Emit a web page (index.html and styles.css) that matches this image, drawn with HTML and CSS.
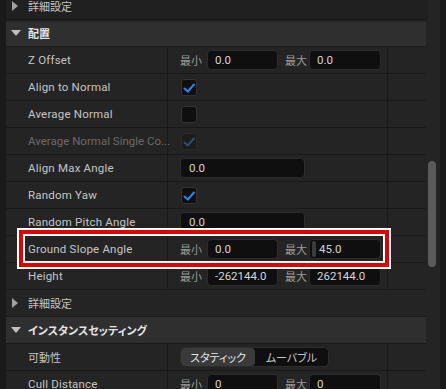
FILE: index.html
```html
<!DOCTYPE html>
<html lang="ja">
<head>
<meta charset="utf-8">
<link rel="stylesheet" href="styles.css">
</head>
<body>
<div class="app">
  <div class="lstrip"></div>
  <div class="panel">
    <div class="row cat top">
      <span class="arrow"><svg class="tri-r" width="6" height="10" viewBox="0 0 6 10"><polygon points="0,0 6,5 0,10"/></svg></span>
      <span class="cat-label">詳細設定</span>
    </div>
    <div class="row cat hdr">
      <span class="arrow"><svg class="tri-d" width="10" height="6" viewBox="0 0 10 6"><polygon points="0,0 10,0 5,6"/></svg></span>
      <span class="hdr-label">配置</span>
    </div>
    <div class="row prop">
      <div class="name">Z Offset</div>
      <div class="val">
        <span class="lbl">最小</span><span class="box b1">0.0</span>
        <span class="lbl l2">最大</span><span class="box b2">0.0</span>
      </div>
      <div class="extra"></div>
    </div>
    <div class="row prop">
      <div class="name">Align to Normal</div>
      <div class="val"><span class="chk"><svg width="16" height="16" viewBox="0 0 16 16"><path d="M3.5 9.5 L6.8 12.5 L13 5.5"/></svg></span></div>
      <div class="extra"></div>
    </div>
    <div class="row prop">
      <div class="name">Average Normal</div>
      <div class="val"><span class="chk"></span></div>
      <div class="extra"></div>
    </div>
    <div class="row prop dis">
      <div class="name">Average Normal Single Co...</div>
      <div class="val"><span class="chk"><svg width="16" height="16" viewBox="0 0 16 16"><path d="M3.5 9.5 L6.8 12.5 L13 5.5"/></svg></span></div>
      <div class="extra"></div>
    </div>
    <div class="row prop">
      <div class="name">Align Max Angle</div>
      <div class="val"><span class="box wide">0.0</span></div>
      <div class="extra"></div>
    </div>
    <div class="row prop">
      <div class="name">Random Yaw</div>
      <div class="val"><span class="chk"><svg width="16" height="16" viewBox="0 0 16 16"><path d="M3.5 9.5 L6.8 12.5 L13 5.5"/></svg></span></div>
      <div class="extra"></div>
    </div>
    <div class="row prop">
      <div class="name">Random Pitch Angle</div>
      <div class="val"><span class="box wide">0.0</span></div>
      <div class="extra"></div>
    </div>
    <div class="row prop">
      <div class="name">Ground Slope Angle</div>
      <div class="val">
        <span class="lbl">最小</span><span class="box b1">0.0</span>
        <span class="lbl l2">最大</span><span class="box b2 grip-box"><span class="grip"></span>45.0</span>
      </div>
      <div class="extra"></div>
    </div>
    <div class="row prop">
      <div class="name">Height</div>
      <div class="val">
        <span class="lbl">最小</span><span class="box b1">-262144.0</span>
        <span class="lbl l2">最大</span><span class="box b2">262144.0</span>
      </div>
      <div class="extra"></div>
    </div>
    <div class="row cat">
      <span class="arrow"><svg class="tri-r" width="6" height="10" viewBox="0 0 6 10"><polygon points="0,0 6,5 0,10"/></svg></span>
      <span class="cat-label">詳細設定</span>
    </div>
    <div class="row cat hdr">
      <span class="arrow"><svg class="tri-d" width="10" height="6" viewBox="0 0 10 6"><polygon points="0,0 10,0 5,6"/></svg></span>
      <span class="hdr-label">インスタンスセッティング</span>
    </div>
    <div class="row prop">
      <div class="name jp">可動性</div>
      <div class="val">
        <span class="seg"><span class="seg-item on">スタティック</span><span class="seg-item">ムーバブル</span></span>
      </div>
      <div class="extra"></div>
    </div>
    <div class="row prop">
      <div class="name">Cull Distance</div>
      <div class="val">
        <span class="lbl">最小</span><span class="box b1">0</span>
        <span class="lbl l2">最大</span><span class="box b2">0</span>
      </div>
      <div class="extra"></div>
    </div>
  </div>
  <div class="track"><div class="thumb"></div></div>
  <div class="rstrip"></div>
  <div class="frame"></div>
</div>
</body>
</html>
```

FILE: styles.css
```css
* { box-sizing: border-box; }
html, body { margin: 0; padding: 0; }
body {
  background: #1a1a1a;
  font-family: Roboto, "Noto Sans CJK JP", sans-serif;
  font-size: 12px;
  color: #c4c4c4;
}
.app {
  position: relative;
  display: flex;
  width: 446px;
  height: 389px;
  overflow: hidden;
}
.lstrip { width: 6px; background: #1a1a1a; flex: none; }
.rstrip { width: 6px; background: #1a1a1a; flex: none; }
.panel {
  width: 420px;
  flex: none;
  margin-top: -7px;
  background: #242424;
  display: flex;
  flex-direction: column;
}
.track {
  width: 14px;
  flex: none;
  background: #242424;
  padding-top: 161px;
}
.thumb {
  width: 8px;
  height: 106px;
  margin-left: 2px;
  border-radius: 4px;
  background: #5a5a5a;
}
.row {
  height: 27px;
  flex: none;
  border-bottom: 1px solid #191919;
  display: flex;
}
.cat {
  align-items: center;
  padding-left: 5px;
}
.top {
  background: #202020;
  border-bottom: 1px solid #141414;
  box-shadow: 0 1px 2px rgba(0,0,0,0.45);
  position: relative;
  z-index: 1;
}
.hdr { background: #2f2f2f; }
.arrow {
  width: 17px;
  display: flex;
  align-items: center;
}
.tri-r { margin-left: 1px; fill: #a0a0a0; }
.tri-d { fill: #c0c0c0; }
.cat-label {
  font-family: "Noto Sans CJK JP", sans-serif;
  font-size: 11px;
  color: #c4c4c4;
}
.hdr-label {
  font-family: "Noto Sans CJK JP", sans-serif;
  font-size: 11px;
  font-weight: 700;
  color: #e4e4e4;
  font-feature-settings: "palt";
}
.prop .name {
  width: 162px;
  flex: none;
  padding-left: 22px;
  border-right: 1px solid #191919;
  display: flex;
  align-items: center;
  white-space: nowrap;
  color: #c4c4c4;
  font-size: 11.5px;
  letter-spacing: 0.2px;
}
.prop .name.jp {
  font-family: "Noto Sans CJK JP", sans-serif;
  font-size: 11px;
  letter-spacing: 0;
}
.dis .name { color: #6a6a6a; letter-spacing: 0; }
.prop .val {
  width: 220px;
  flex: none;
  padding-left: 12px;
  border-right: 1px solid #191919;
  display: flex;
  align-items: center;
}
.extra { flex: 1; }
.lbl {
  font-family: "Noto Sans CJK JP", sans-serif;
  font-size: 11px;
  color: #9a9a9a;
  width: 27px;
  flex: none;
  white-space: nowrap;
}
.lbl.l2 { width: 24px; margin-left: 7px; }
.box {
  height: 20px;
  background: #0f0f0f;
  border: 1px solid #2c2c2c;
  border-radius: 4px;
  display: flex;
  align-items: center;
  padding-left: 7px;
  color: #d6d6d6;
  font-size: 11.5px;
  flex: none;
}
.b1 { width: 71px; }
.b2 { width: 72px; }
.wide { width: 125px; padding-left: 8px; }
.grip-box { padding-left: 2px; }
.grip {
  width: 4px;
  height: 16px;
  border-radius: 2px;
  background: #3c3c3c;
  margin-right: 3px;
}
.chk {
  width: 16px;
  height: 17px;
  margin-left: 1px;
  background: #0f0f0f;
  border: 1px solid #333;
  border-radius: 3px;
  display: flex;
  align-items: center;
  justify-content: center;
}
.chk svg {
  fill: none;
  stroke: #2d86e6;
  stroke-width: 2;
  stroke-linecap: round;
  stroke-linejoin: round;
  flex: none;
}
.dis .chk { background: #1c1c1c; border-color: #2a2a2a; }
.dis .chk svg { stroke: #2d4d72; }
.seg {
  display: flex;
  height: 20px;
  width: 149px;
  border-radius: 5px;
  background: #0f0f0f;
  border: 1px solid #2c2c2c;
  overflow: hidden;
  font-family: "Noto Sans CJK JP", sans-serif;
  font-size: 11px;
  font-feature-settings: "palt";
}
.seg-item {
  flex: 1;
  display: flex;
  align-items: center;
  justify-content: center;
  color: #c8c8c8;
}
.seg-item.on {
  flex: none;
  width: 74px;
  background: #3a3a3a;
  border-radius: 4px;
  color: #e6e6e6;
}
.frame {
  position: absolute;
  left: 17px;
  top: 228px;
  width: 374px;
  height: 41px;
  border: 2px solid #ffffff;
  box-shadow: inset 0 0 0 4px #e00000, inset 0 0 0 6px #ffffff;
  pointer-events: none;
}
```
